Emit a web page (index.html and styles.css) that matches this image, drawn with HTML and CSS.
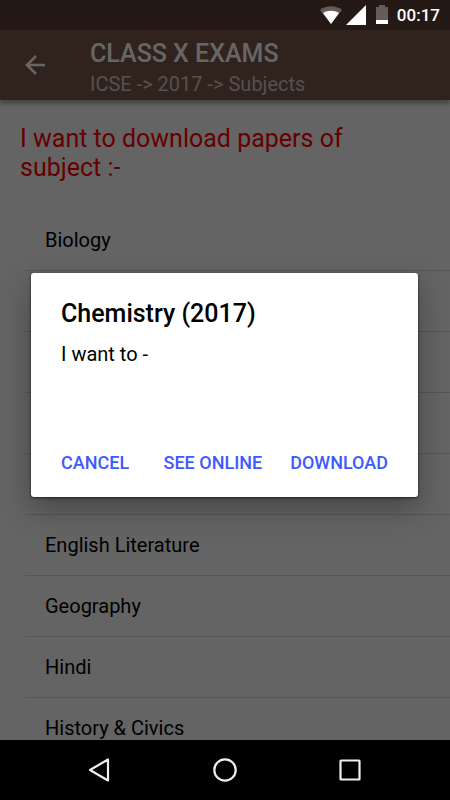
FILE: index.html
```html
<!DOCTYPE html>
<html lang="en">
<head>
<meta charset="utf-8">
<meta name="viewport" content="width=device-width, initial-scale=1">
<title>Class X Exams</title>
<link rel="stylesheet" href="styles.css">
</head>
<body>
<div class="app">
  <div class="status">
    <div class="status-items">
      <svg class="wifi" width="22" height="20" viewBox="0 0 22 20" aria-hidden="true">
        <path class="faint" d="M0 5C6 0 16 0 22 5L11 19Z"/>
        <path class="solid" d="M3 8C7.500 5 14.500 5 19 8L11 19Z"/>
      </svg>
      <svg class="signal" width="20" height="20" viewBox="0 0 20 20" aria-hidden="true">
        <path class="solid" d="M20 0V20H0Z"/>
      </svg>
      <svg class="battery" width="12" height="20" viewBox="0 0 12 20" aria-hidden="true">
        <path class="faint" d="M3 0H9V2H12V15H0V2H3Z"/>
        <path class="solid" d="M0 15H12V19H0Z"/>
      </svg>
      <span>00:17</span>
    </div>
  </div>
  <header class="toolbar">
    <button class="back" type="button" aria-label="Back">
      <svg width="20" height="20" viewBox="0 0 20 20" aria-hidden="true">
        <path d="M20 10H2M11 1L2 10L11 19"/>
      </svg>
    </button>
    <div class="titles">
      <h1>CLASS X EXAMS</h1>
      <p>ICSE -&gt; 2017 -&gt; Subjects</p>
    </div>
  </header>
  <main class="content">
    <h2>I want to download papers of subject :-</h2>
    <ul class="subjects">
      <li><a href="#">Biology</a></li>
      <li></li>
      <li></li>
      <li></li>
      <li></li>
      <li><a href="#">English Literature</a></li>
      <li><a href="#">Geography</a></li>
      <li><a href="#">Hindi</a></li>
      <li><a href="#">History &amp; Civics</a></li>
    </ul>
  </main>
  <nav class="navbar" aria-label="System">
    <button type="button" aria-label="Back">
      <svg width="24" height="24" viewBox="0 0 24 24" aria-hidden="true"><path d="M20 1.500V22.500L2 12Z"/></svg>
    </button>
    <button type="button" aria-label="Home">
      <svg width="24" height="24" viewBox="0 0 24 24" aria-hidden="true"><circle cx="12" cy="12" r="10.700"/></svg>
    </button>
    <button type="button" aria-label="Recent apps">
      <svg width="24" height="24" viewBox="0 0 24 24" aria-hidden="true"><rect x="2.500" y="2.500" width="19" height="19" rx="0.500"/></svg>
    </button>
  </nav>
  <div class="scrim">
    <section class="dialog" role="dialog" aria-labelledby="dialog-title">
      <h2 id="dialog-title">Chemistry (2017)</h2>
      <p>I want to -</p>
      <div class="actions">
        <button class="neutral" type="button">CANCEL</button>
        <button type="button">SEE ONLINE</button>
        <button type="button">DOWNLOAD</button>
      </div>
    </section>
  </div>
</div>
</body>
</html>
```
FILE: styles.css
```css
* {
  box-sizing: border-box;
}

body,
h1,
h2,
p,
ul {
  margin: 0;
  padding: 0;
}

body {
  font-family: Roboto, "Liberation Sans", sans-serif;
  background: #000;
}

button {
  padding: 0;
  border: 0;
  background: none;
  font: inherit;
  cursor: pointer;
}

svg {
  display: block;
}

.app {
  position: relative;
  display: flex;
  flex-direction: column;
  height: 100vh;
}

/* Status bar */
.status {
  flex: none;
  height: 30px;
  background: #5d4037;
}

.status-items {
  position: relative;
  z-index: 2;
  display: flex;
  align-items: center;
  justify-content: flex-end;
  height: 30px;
  padding-right: 10px;
  color: #fff;
  font-size: 17px;
  font-weight: 500;
}

.wifi {
  margin-right: 4px;
}

.signal {
  margin-right: 10px;
}

.battery {
  margin-right: 9px;
}

.solid {
  fill: #fff;
}

.faint {
  fill: #655c59;
}

/* Toolbar */
.toolbar {
  position: relative;
  display: flex;
  flex: none;
  align-items: center;
  height: 70px;
  background: #795548;
  box-shadow: 0 4px 4px rgba(0, 0, 0, 0.3);
  color: #fff;
}

.back {
  display: grid;
  place-items: center;
  width: 70px;
  height: 70px;
  margin-right: 20px;
}

.back path {
  fill: none;
  stroke: #fff;
  stroke-width: 2.5;
}

.titles {
  padding-top: 7px;
}

.titles h1 {
  font-size: 25px;
  font-weight: 500;
  line-height: 30px;
}

.titles p {
  color: rgba(255, 255, 255, 0.7);
  font-size: 20px;
  line-height: 30px;
}

/* Subject list */
.content {
  flex: 1;
  min-height: 0;
  overflow: hidden;
  background: #fafafa;
}

.content h2 {
  padding: 24px 80px 0 20px;
  color: #f00;
  font-size: 25px;
  font-weight: 400;
  line-height: 29px;
}

.subjects {
  padding: 28px 0 0 25px;
  list-style: none;
}

.subjects li {
  min-height: 61px;
  border-bottom: 1px solid #d8d8d8;
}

.subjects a {
  display: block;
  padding-left: 20px;
  color: #000;
  font-size: 20px;
  line-height: 60px;
  text-decoration: none;
}

/* System navigation */
.navbar {
  position: relative;
  z-index: 2;
  display: flex;
  flex: none;
  align-items: center;
  justify-content: center;
  gap: 101px;
  height: 60px;
  background: #000;
}

.navbar path,
.navbar circle,
.navbar rect {
  fill: none;
  stroke: #eee;
  stroke-width: 2.2;
  stroke-linejoin: round;
}

/* Dialog */
.scrim {
  position: absolute;
  inset: 0;
  display: flex;
  align-items: center;
  justify-content: center;
  padding: 30px 32px 60px 31px;
  background: rgba(0, 0, 0, 0.6);
}

.dialog {
  width: 100%;
  max-width: 560px;
  padding: 25px 30px 11px;
  border-radius: 3px;
  background: #fff;
  box-shadow: 0 1px 3px rgba(0, 0, 0, 0.6), 0 12px 30px rgba(0, 0, 0, 0.3);
  color: #000;
}

.dialog h2 {
  font-size: 25px;
  font-weight: 500;
  line-height: 32px;
}

.dialog p {
  min-height: 108px;
  padding-top: 12px;
  font-size: 20px;
  line-height: 24px;
}

.actions {
  display: flex;
  gap: 28px;
}

.actions button {
  height: 48px;
  color: #3d5afe;
  font-size: 18px;
  font-weight: 500;
}

.actions .neutral {
  margin-right: auto;
}
```
